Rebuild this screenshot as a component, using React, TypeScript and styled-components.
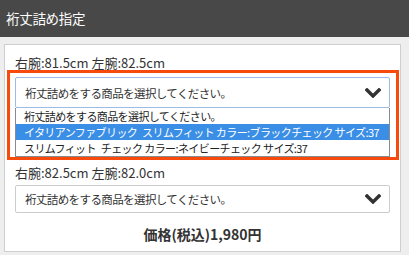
import React from "react"
import styled, { createGlobalStyle } from "styled-components"

const GlobalStyle = createGlobalStyle`
  html, body {
    margin: 0;
    padding: 0;
    background: #eeeeee;
  }
  body {
    font-family: "Noto Sans CJK JP", "Noto Sans", sans-serif;
    color: #333333;
  }
`

type Option = { label: string }

const options: Option[] = [
  { label: "裄丈詰めをする商品を選択してください。" },
  { label: "イタリアンファブリック\u2002スリムフィット カラー:ブラックチェック サイズ:37" },
  { label: "スリムフィット\u2002チェック カラー:ネイビーチェック サイズ:37" },
]

const Chevron = () => (
  <svg width="16" height="10" viewBox="0 0 16 10">
    <path d="M2 2 L8 8 L14 2" fill="none" stroke="#333333" strokeWidth="3.4" strokeLinecap="square" />
  </svg>
)

type SelectBoxProps = {
  value: string
  focused?: boolean
  openIndex?: number
  open?: boolean
}

const SelectBox: React.FC<SelectBoxProps> = ({ value, focused, open, openIndex }) => (
  <SelectWrap>
    <SelectButton focused={focused}>
      <SelectText>{value}</SelectText>
      <ChevronWrap>
        <Chevron />
      </ChevronWrap>
    </SelectButton>
    {open && (
      <DropList>
        {options.map((o, i) => (
          <DropItem key={i} active={i === openIndex}>
            {o.label}
          </DropItem>
        ))}
      </DropList>
    )}
    {open && <Highlight />}
  </SelectWrap>
)

export default function App() {
  return (
    <>
      <GlobalStyle />
      <Page>
        <Header>裄丈詰め指定</Header>
        <Body>
          <Panel>
            <Field>
              <Label>右腕:81.5cm 左腕:82.5cm</Label>
              <SelectBox value={options[0].label} focused open openIndex={1} />
            </Field>
            <Field second>
              <Label>右腕:82.5cm 左腕:82.0cm</Label>
              <SelectBox value={options[0].label} />
            </Field>
            <Price>価格(税込)1,980円</Price>
          </Panel>
        </Body>
      </Page>
    </>
  )
}

const Page = styled.div`
  width: 409px;
  height: 255px;
  overflow: hidden;
  background: #eeeeee;
`

const Header = styled.div`
  height: 37px;
  background: #484848;
  color: #ffffff;
  font-size: 13.5px;
  line-height: 37px;
  padding-left: 6px;
  letter-spacing: -0.3px;
`

const Body = styled.div`
  padding: 7px 8px 0 4px;
`

const Panel = styled.div`
  background: #ffffff;
  border: 1px solid #cfcfcf;
  padding: 10px 10px 6px 10px;
  height: 208px;
  box-sizing: border-box;
`

type FieldProps = { second?: boolean }

const Field = styled.div<FieldProps>`
  display: flex;
  flex-direction: column;
  gap: ${({ second }) => (second ? "4px" : "6px")};
  margin-top: ${({ second }) => (second ? "57px" : "0")};
`

const Label = styled.div`
  font-size: 13px;
  line-height: 16px;
  color: #333333;
`

const SelectWrap = styled.div`
  position: relative;
`

type SelectButtonProps = { focused?: boolean }

const SelectButton = styled.div<SelectButtonProps>`
  height: ${({ focused }) => (focused ? "31px" : "28px")};
  box-sizing: border-box;
  border: 1px solid ${({ focused }) => (focused ? "#9cbbe6" : "#cccccc")};
  border-radius: 2px;
  background: #ffffff;
  display: flex;
  align-items: center;
  justify-content: space-between;
  padding: 0 8px 0 9px;
`

const SelectText = styled.span`
  font-size: 11.5px;
  letter-spacing: -0.6px;
  color: #333333;
  white-space: nowrap;
`

const ChevronWrap = styled.span`
  display: flex;
  align-items: center;
`

const DropList = styled.div`
  position: absolute;
  top: 100%;
  left: 0;
  right: 0;
  background: #ffffff;
  border: 1px solid #8a8a8a;
  border-top: none;
  z-index: 2;
`

type DropItemProps = { active?: boolean }

const DropItem = styled.div<DropItemProps>`
  height: 16px;
  line-height: 16px;
  padding-left: 8px;
  font-size: 11px;
  letter-spacing: -0.6px;
  white-space: nowrap;
  background: ${({ active }) => (active ? "#3a8ee6" : "#ffffff")};
  color: ${({ active }) => (active ? "#ffffff" : "#222222")};
`

const Highlight = styled.div`
  position: absolute;
  top: -7px;
  left: -8px;
  right: -9px;
  height: 90px;
  border: 3px solid #f84a0c;
  box-sizing: border-box;
  pointer-events: none;
  z-index: 3;
`

const Price = styled.div`
  margin-top: 12px;
  text-align: center;
  font-size: 14px;
  font-weight: bold;
  line-height: 18px;
  color: #333333;
`
